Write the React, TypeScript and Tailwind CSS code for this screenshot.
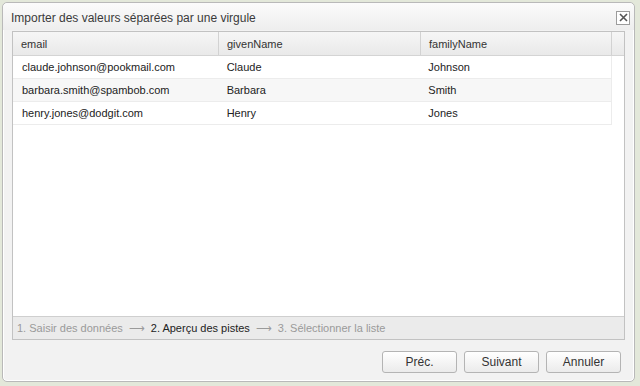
const rows = [
  { email: 'claude.johnson@pookmail.com', given: 'Claude', family: 'Johnson' },
  { email: 'barbara.smith@spambob.com', given: 'Barbara', family: 'Smith' },
  { email: 'henry.jones@dodgit.com', given: 'Henry', family: 'Jones' },
];

const Button = ({ label }: { label: string }) => (
  <button className="w-[75px] h-[22px] rounded-[3px] border border-[#b4b4b4] bg-gradient-to-b from-white to-[#ebebeb] text-[12px] text-[#333] leading-none">
    {label}
  </button>
);

export default function App() {
  return (
    <div
      className="w-[640px] h-[386px] bg-[#e3e8da] p-[2px] pr-[5px] pb-[4px]"
      style={{ fontFamily: '"Liberation Sans", Arial, sans-serif' }}
    >
      <div className="w-full h-full rounded-[5px] border border-[#b9b9b9] bg-[#f2f2f2] flex flex-col shadow-[inset_0_0_0_1px_#ffffff]">
        {/* titre */}
        <div className="h-[27px] flex items-center justify-between pl-[8px] pr-[4px] rounded-t-[5px] bg-gradient-to-b from-[#fbfbfb] to-[#eeeeee]">
          <span className="text-[12px] text-[#3a3a3a] pt-[3px]">Importer des valeurs séparées par une virgule</span>
          <div className="w-[14px] h-[14px] mt-[2px] border border-[#9c9c9c] bg-white flex items-center justify-center">
            <svg width="9" height="9" viewBox="0 0 9 9">
              <path d="M1 1L8 8M8 1L1 8" stroke="#555" strokeWidth="1.6" />
            </svg>
          </div>
        </div>

        {/* grille + étapes */}
        <div className="mx-[9px] mt-[1px] h-[309px] border border-[#c2c2c2] flex flex-col bg-white">
          <div className="flex-1 flex flex-col border-b border-[#cfcfcf]">
            <div className="flex h-[24px] border-b border-[#d4d4d4] bg-gradient-to-b from-[#f6f6f6] to-[#e9e9e9] text-[11px] text-[#333]">
              <div className="w-[206px] pl-[8px] pt-[1px] flex items-center border-r border-[#d2d2d2]">email</div>
              <div className="w-[202px] pl-[8px] pt-[1px] flex items-center border-r border-[#d2d2d2]">givenName</div>
              <div className="w-[191px] pl-[8px] pt-[1px] flex items-center border-r border-[#d2d2d2]">familyName</div>
              <div className="flex-1" />
            </div>
            {rows.map((r, i) => (
              <div
                key={r.email}
                className={`flex h-[23px] w-[599px] border-b border-r border-[#ececec] text-[11px] text-[#222] ${
                  i % 2 === 1 ? 'bg-[#f7f7f7]' : 'bg-white'
                }`}
              >
                <div className="w-[206px] pl-[9px] flex items-center">{r.email}</div>
                <div className="w-[202px] pl-[8px] flex items-center">{r.given}</div>
                <div className="w-[191px] pl-[8px] flex items-center">{r.family}</div>
              </div>
            ))}
          </div>
          <div className="h-[22px] bg-[#ebebeb] flex items-center pl-[4px] pt-[1px] text-[11px] text-[#9a9a9a] gap-[6px]">
            <span>1. Saisir des données</span>
            <span>⟶</span>
            <span className="text-[#222]">2. Aperçu des pistes</span>
            <span>⟶</span>
            <span>3. Sélectionner la liste</span>
          </div>
        </div>

        {/* boutons */}
        <div className="flex-1 flex items-center justify-end gap-[7px] pr-[13px] pt-[2px]">
          <Button label="Préc." />
          <Button label="Suivant" />
          <Button label="Annuler" />
        </div>
      </div>
    </div>
  );
}
